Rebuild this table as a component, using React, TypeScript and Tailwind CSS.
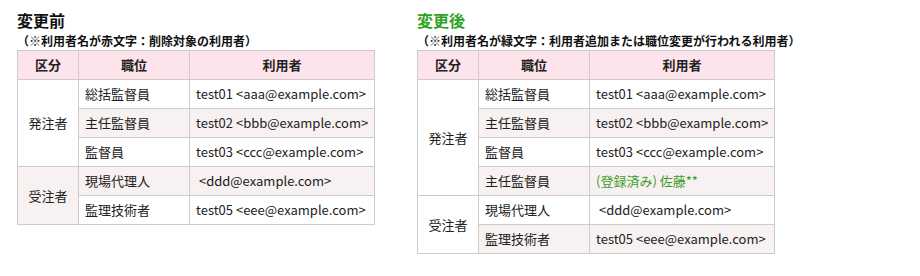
import React from "react";

type Row = { role: string; user: React.ReactNode };
type Group = { side: string; rows: Row[] };

const before: Group[] = [
  {
    side: "発注者",
    rows: [
      { role: "総括監督員", user: "test01 <aaa@example.com>" },
      { role: "主任監督員", user: "test02 <bbb@example.com>" },
      { role: "監督員", user: "test03 <ccc@example.com>" },
    ],
  },
  {
    side: "受注者",
    rows: [
      { role: "現場代理人", user: " <ddd@example.com>" },
      { role: "監理技術者", user: "test05 <eee@example.com>" },
    ],
  },
];

const after: Group[] = [
  {
    side: "発注者",
    rows: [
      { role: "総括監督員", user: "test01 <aaa@example.com>" },
      { role: "主任監督員", user: "test02 <bbb@example.com>" },
      { role: "監督員", user: "test03 <ccc@example.com>" },
      { role: "主任監督員", user: <span className="text-[#3c9e2a]">(登録済み) 佐藤**</span> },
    ],
  },
  {
    side: "受注者",
    rows: [
      { role: "現場代理人", user: " <ddd@example.com>" },
      { role: "監理技術者", user: "test05 <eee@example.com>" },
    ],
  },
];

function UserTable({ groups }: { groups: Group[] }) {
  let i = 0;
  return (
    <table className="border-collapse text-[13px] text-[#222]">
      <thead>
        <tr className="bg-[#fde4ea] font-bold">
          <th className="h-[29px] w-[61px] border border-[#cccccc] p-0 text-center">区分</th>
          <th className="h-[29px] w-[111px] border border-[#cccccc] p-0 text-center">職位</th>
          <th className="h-[29px] w-[184px] border border-[#cccccc] p-0 text-center">利用者</th>
        </tr>
      </thead>
      <tbody>
        {groups.map((g) =>
          g.rows.map((r, idx) => {
            // rows alternate white / light pink; the group cell takes the colour of its first row
            const alt = i++ % 2 === 1;
            const bg = alt ? "bg-[#f7f1f1]" : "bg-white";
            return (
              <tr key={g.side + idx}>
                {idx === 0 ? (
                  <td rowSpan={g.rows.length} className={`border border-[#cccccc] p-0 text-center ${bg}`}>
                    {g.side}
                  </td>
                ) : null}
                <td className={`h-[29px] border border-[#cccccc] px-[6px] py-0 ${bg}`}>{r.role}</td>
                <td className={`h-[29px] whitespace-pre border border-[#cccccc] px-[6px] py-0 ${bg}`}>{r.user}</td>
              </tr>
            );
          }),
        )}
      </tbody>
    </table>
  );
}

export default function App() {
  return (
    <div
      className="flex h-[276px] w-[920px] bg-white pl-[17px] pt-[8px]"
      style={{ fontFamily: '"Noto Sans CJK JP", "Noto Sans", sans-serif' }}
    >
      <div className="w-[400px]">
        <h2 className="text-[16px] font-bold leading-[24px] text-[#111]">変更前</h2>
        <p className="text-[12px] font-bold leading-[18px] text-[#111]">（※利用者名が赤文字：削除対象の利用者）</p>
        <UserTable groups={before} />
      </div>
      <div className="w-[400px]">
        <h2 className="text-[16px] font-bold leading-[24px] text-[#2ea31e]">変更後</h2>
        <p className="whitespace-nowrap text-[12px] font-bold leading-[18px] text-[#111]">
          （※利用者名が緑文字：利用者追加または職位変更が行われる利用者）
        </p>
        <UserTable groups={after} />
      </div>
    </div>
  );
}
